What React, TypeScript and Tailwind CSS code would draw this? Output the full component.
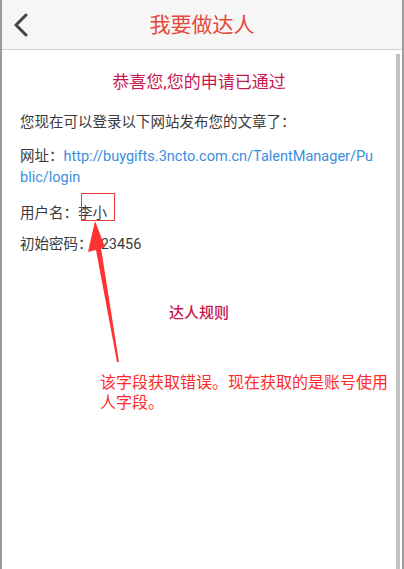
const cjk = { fontFamily: '"Roboto", "Noto Sans CJK SC", sans-serif' }

function BackIcon() {
  return (
    <svg width="16" height="24" viewBox="0 0 16 24" fill="none">
      <path d="M13 2 L3 12 L13 22" stroke="#444" strokeWidth="3" strokeLinecap="round" strokeLinejoin="round" />
    </svg>
  )
}

function Annotation() {
  return (
    <>
      <div className="absolute left-[81px] top-[193px] h-[28px] w-[34px] border border-[#e53935]" />
      <svg className="absolute left-0 top-0" width="404" height="569" viewBox="0 0 404 569">
        <polygon points="95,221 105,247 101,248 119,362 117,362 96,250 88,252" fill="#ff3333" />
      </svg>
      <p
        className="absolute left-[100px] top-[371px] w-[290px] text-[16px] leading-[20px] text-[#ff2a2a]"
        style={{ fontFamily: '"Noto Sans CJK SC", sans-serif' }}
      >
        该字段获取错误。现在获取的是账号使用人字段。
      </p>
    </>
  )
}

export default function App() {
  return (
    <div className="relative flex h-[569px] w-[404px] overflow-hidden bg-[#9a9a9a] pl-[2px] pr-[2px]" style={cjk}>
      <div className="flex flex-1 flex-col bg-white">
        <header className="relative flex h-[50px] shrink-0 items-center justify-center border-b border-[#cfcfcf] bg-[#f6f6f6]">
          <div className="absolute left-[11px] top-[13px]">
            <BackIcon />
          </div>
          <h1 className="text-[21px] leading-[24px] text-[#e8483c]">我要做达人</h1>
        </header>
        <div className="flex flex-1">
          <main className="flex-1 pl-[18px] pr-[18px] pt-[20px] text-[14.5px] leading-[21px] text-[#3a3a3a]">
            <h2 className="text-center text-[17px] leading-[24px] text-[#c8174f]">恭喜您,您的申请已通过</h2>
            <p className="mt-[18px]">您现在可以登录以下网站发布您的文章了：</p>
            <p className="mt-[13px] break-all">
              网址：<span className="text-[#3b8de0]">http://buygifts.3ncto.com.cn/TalentManager/Public/login</span>
            </p>
            <p className="mt-[15px]">用户名：李小</p>
            <p className="mt-[10px]">初始密码：123456</p>
            <p className="mt-[48px] text-center text-[15px] font-medium text-[#c8174f]">达人规则</p>
          </main>
          <div className="mr-[2px] mt-[4px] w-[4px] bg-[#c2c2c2]" />
        </div>
      </div>
      <Annotation />
    </div>
  )
}
